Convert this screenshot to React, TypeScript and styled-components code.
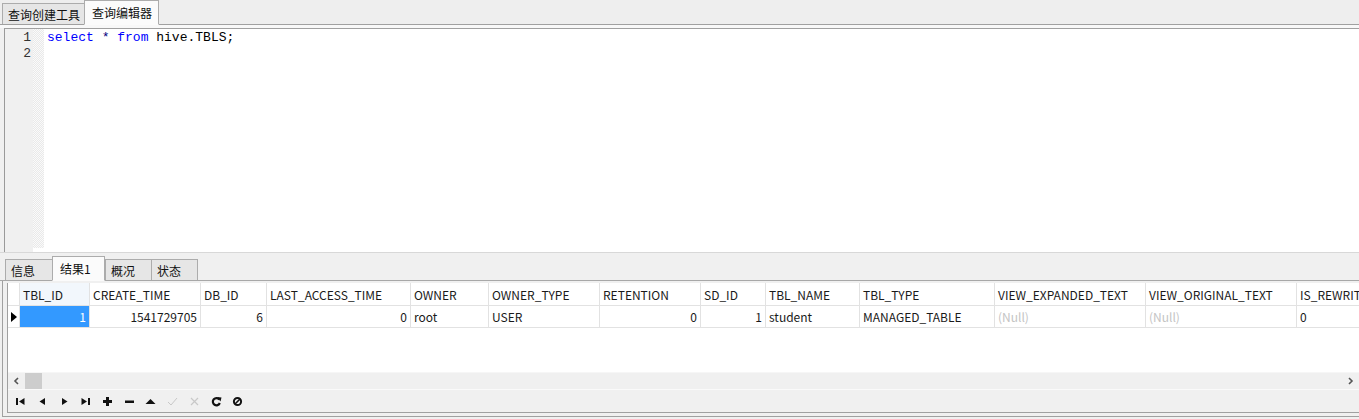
import React from "react";
import styled, { createGlobalStyle } from "styled-components";

const Global = createGlobalStyle`
  html, body { margin: 0; padding: 0; background: #f0f0f0; }
  #root { width: 1359px; height: 419px; overflow: hidden; }
`;

const UI = `"Noto Sans CJK SC", "Microsoft YaHei", sans-serif`;

const Window = styled.div`
  width: 1359px;
  height: 419px;
  display: flex;
  flex-direction: column;
  background: #f0f0f0;
  font-family: ${UI};
  font-size: 12px;
  color: #1a1a1a;
`;

const TopTabs = styled.div`
  height: 24px;
  display: flex;
  align-items: flex-end;
  padding-left: 2px;
  background: #eeeeee;
  border-bottom: 1px solid #a0a0a0;
`;

const Tab = styled.div<{ $active?: boolean; $w: number }>`
  box-sizing: border-box;
  width: ${(p) => p.$w}px;
  height: ${(p) => (p.$active ? 25 : 21)}px;
  margin-bottom: ${(p) => (p.$active ? -1 : 0)}px;
  display: flex;
  align-items: center;
  padding-left: ${(p) => (p.$active ? 7 : 5)}px;
  padding-top: ${(p) => (p.$active ? 0 : 1)}px;
  background: ${(p) => (p.$active ? "#fbfbfb" : "#e6e6e6")};
  border: 1px solid #acacac;
  border-bottom: ${(p) => (p.$active ? "1px solid #fbfbfb" : "none")};
  margin-right: ${(p) => (p.$active ? 0 : -1)}px;
  font-size: 12px;
  color: #111;
  position: relative;
  z-index: ${(p) => (p.$active ? 2 : 1)};
  white-space: nowrap;
`;

const Gap = styled.div<{ $h: number }>`
  height: ${(p) => p.$h}px;
  background: #f8f8f8;
`;

const Editor = styled.div`
  height: 219px;
  display: flex;
  margin-left: 4px;
  border-top: 1px solid #a0a0a0;
  border-left: 1px solid #9a9a9a;
  background: #fff;
`;

const Gutter = styled.div`
  width: 28px;
  background: #f0f0f0;
  display: flex;
  flex-direction: column;
  align-items: flex-end;
  padding-top: 1px;
  box-sizing: border-box;
`;

const LineNo = styled.div`
  height: 16px;
  line-height: 16px;
  font-family: "Liberation Mono", monospace;
  font-size: 13px;
  color: #333;
  padding-right: 2px;
`;

const Hatch = styled.div`
  width: 11px;
  background-color: #f6f6f6;
  background-image: repeating-conic-gradient(#e9e9e9 0 25%, #fafafa 0 50%);
  background-size: 2px 2px;
`;

const Code = styled.div`
  flex: 1;
  padding-left: 3px;
  padding-top: 1px;
  font-family: "Liberation Mono", "Courier New", monospace;
  font-size: 13px;
`;

const CodeLine = styled.div`
  height: 16px;
  line-height: 16px;
  white-space: pre;
  color: #000;
`;

const Kw = styled.span`
  color: #0000ff;
`;
const Op = styled.span`
  color: #000080;
`;

const Splitter = styled.div`
  height: 4px;
  margin-left: 4px;
  display: flex;
  border-left: 1px solid #9a9a9a;
  background: #fff;
`;

const SplitGutter = styled.div`
  width: 28px;
  background: #f0f0f0;
`;

const SplitLine = styled.div`
  height: 1px;
  background: #d8d8d8;
`;

const BottomTabs = styled.div`
  height: 25px;
  display: flex;
  align-items: flex-end;
  padding-left: 5px;
  margin-top: 2px;
  border-bottom: 1px solid #a8a8a8;
  background: #f0f0f0;
`;

const GridPanel = styled.div`
  flex: 1;
  display: flex;
  flex-direction: column;
  margin-left: 2px;
  margin-bottom: 2px;
  border-left: 1px solid #a0a0a0;
  border-bottom: 1px solid #a0a0a0;
  padding: 2px 0 3px 4px;
  background: #f0f0f0;
`;

const GridInner = styled.div`
  flex: 1;
  display: flex;
  flex-direction: column;
  border-left: 1px solid #a0a0a0;
  border-bottom: 1px solid #a0a0a0;
`;

const GridBody = styled.div`
  flex: 1;
  background: #fff;
  overflow: hidden;
`;

const Row = styled.div<{ $h: number }>`
  display: flex;
  height: ${(p) => p.$h}px;
  border-bottom: 1px solid #e2e2e2;
  box-sizing: border-box;
`;

const Indicator = styled.div`
  width: 11px;
  flex: none;
  border-right: 1px solid #e2e2e2;
  display: flex;
  align-items: center;
  justify-content: center;
  background: #fff;
`;

const Cell = styled.div<{ $w: number; $right?: boolean; $null?: boolean; $sel?: boolean; $head?: boolean; $selHead?: boolean }>`
  width: ${(p) => p.$w}px;
  flex: none;
  box-sizing: border-box;
  border-right: 1px solid #e2e2e2;
  padding: 0 3px;
  display: flex;
  align-items: center;
  justify-content: ${(p) => (p.$right ? "flex-end" : "flex-start")};
  white-space: nowrap;
  overflow: hidden;
  font-size: 12px;
  color: ${(p) => (p.$sel ? "#fff" : p.$null ? "#c4c4c4" : "#1a1a1a")};
  background: ${(p) => (p.$sel ? "#3399ff" : p.$selHead ? "#f2f7fc" : "#fff")};
  padding-top: ${(p) => (p.$head ? 1 : 0)}px;
`;

const HScroll = styled.div`
  height: 16px;
  flex: none;
  display: flex;
  align-items: center;
  background: #f0f0f0;
  border-top: 1px solid #f6f6f6;
`;

const ScrollArrow = styled.div`
  width: 17px;
  height: 16px;
  display: flex;
  align-items: center;
  justify-content: center;
`;

const Thumb = styled.div`
  width: 17px;
  height: 16px;
  background: #cdcdcd;
`;

const Track = styled.div`
  flex: 1;
`;

const Toolbar = styled.div`
  height: 22px;
  flex: none;
  display: flex;
  align-items: center;
  padding-left: 2px;
  border-top: 1px solid #fafafa;
  background: #f0f0f0;
`;

const ToolBtn = styled.div`
  width: 21.7px;
  height: 20px;
  display: flex;
  align-items: center;
  justify-content: center;
`;

const cols: { name: string; w: number; val: string; right?: boolean; nul?: boolean }[] = [
  { name: "TBL_ID", w: 70, val: "1", right: true },
  { name: "CREATE_TIME", w: 111, val: "1541729705", right: true },
  { name: "DB_ID", w: 66, val: "6", right: true },
  { name: "LAST_ACCESS_TIME", w: 144, val: "0", right: true },
  { name: "OWNER", w: 78, val: "root" },
  { name: "OWNER_TYPE", w: 111, val: "USER" },
  { name: "RETENTION", w: 101, val: "0", right: true },
  { name: "SD_ID", w: 65, val: "1", right: true },
  { name: "TBL_NAME", w: 94, val: "student" },
  { name: "TBL_TYPE", w: 135, val: "MANAGED_TABLE" },
  { name: "VIEW_EXPANDED_TEXT", w: 151, val: "(Null)", nul: true },
  { name: "VIEW_ORIGINAL_TEXT", w: 151, val: "(Null)", nul: true },
  { name: "IS_REWRITE_ENABLED", w: 150, val: "0" },
];

const Ico = ({ children, c = "#111" }: { children: React.ReactNode; c?: string }) => (
  <svg width="11" height="11" viewBox="0 0 11 11" fill={c} stroke={c}>
    {children}
  </svg>
);

const icons = [
  <Ico key="first">
    <rect x="1" y="2" width="2" height="7" stroke="none" />
    <polygon points="9.5,2 9.5,9 4,5.5" stroke="none" />
  </Ico>,
  <Ico key="prev">
    <polygon points="8,2 8,9 2.5,5.5" stroke="none" />
  </Ico>,
  <Ico key="next">
    <polygon points="3,2 3,9 8.5,5.5" stroke="none" />
  </Ico>,
  <Ico key="last">
    <polygon points="1.5,2 1.5,9 7,5.5" stroke="none" />
    <rect x="8" y="2" width="2" height="7" stroke="none" />
  </Ico>,
  <Ico key="plus">
    <rect x="4" y="1" width="3" height="9" stroke="none" />
    <rect x="1" y="4" width="9" height="3" stroke="none" />
  </Ico>,
  <Ico key="minus">
    <rect x="1" y="4.5" width="9" height="2.5" stroke="none" />
  </Ico>,
  <Ico key="up">
    <polygon points="0.5,8 10.5,8 5.5,3" stroke="none" />
  </Ico>,
  <Ico key="check" c="#c8c8c8">
    <polyline points="1,6 4,9 10,2" fill="none" strokeWidth="1" />
  </Ico>,
  <Ico key="x" c="#c8c8c8">
    <path d="M2 2 L9 9 M9 2 L2 9" fill="none" strokeWidth="1.2" />
  </Ico>,
  <Ico key="refresh">
    <path d="M8.3 3.5 A3.6 3.6 0 1 0 8.8 7" fill="none" strokeWidth="2.2" />
    <polygon points="6,1 10.5,1.5 9.5,5.5" stroke="none" />
  </Ico>,
  <Ico key="stop">
    <circle cx="5.5" cy="5.5" r="3.6" fill="none" strokeWidth="2" />
    <path d="M3 8 L8 3" fill="none" strokeWidth="1.6" />
  </Ico>,
];

export default function App() {
  return (
    <Window>
      <Global />
      <TopTabs>
        <Tab $w={83}>查询创建工具</Tab>
        <Tab $w={75} $active>
          查询编辑器
        </Tab>
      </TopTabs>
      <Gap $h={3} />
      <Editor>
        <Gutter>
          <LineNo>1</LineNo>
          <LineNo>2</LineNo>
        </Gutter>
        <Hatch />
        <Code>
          <CodeLine>
            <Kw>select</Kw> <Op>*</Op> <Kw>from</Kw> hive.TBLS;
          </CodeLine>
          <CodeLine> </CodeLine>
        </Code>
      </Editor>
      <Splitter>
        <SplitGutter />
      </Splitter>
      <SplitLine />
      <BottomTabs>
        <Tab $w={48}>信息</Tab>
        <Tab $w={53} $active>
          结果1
        </Tab>
        <Tab $w={47}>概况</Tab>
        <Tab $w={47}>状态</Tab>
      </BottomTabs>
      <GridPanel>
        <GridInner>
          <GridBody>
            <Row $h={23}>
              <Indicator />
              {cols.map((c, i) => (
                <Cell key={c.name} $w={c.w} $head $selHead={i === 0}>
                  {c.name}
                </Cell>
              ))}
            </Row>
            <Row $h={22}>
              <Indicator>
                <svg width="6" height="10" viewBox="0 0 6 10">
                  <polygon points="0,0 6,5 0,10" fill="#000" />
                </svg>
              </Indicator>
              {cols.map((c, i) => (
                <Cell key={c.name} $w={c.w} $right={c.right} $null={c.nul} $sel={i === 0}>
                  {c.val}
                </Cell>
              ))}
            </Row>
          </GridBody>
          <HScroll>
            <ScrollArrow>
              <svg width="7" height="8" viewBox="0 0 7 8">
                <path d="M5 1 L2 4 L5 7" fill="none" stroke="#555" strokeWidth="1.6" />
              </svg>
            </ScrollArrow>
            <Thumb />
            <Track />
            <ScrollArrow>
              <svg width="7" height="8" viewBox="0 0 7 8">
                <path d="M2 1 L5 4 L2 7" fill="none" stroke="#555" strokeWidth="1.6" />
              </svg>
            </ScrollArrow>
          </HScroll>
          <Toolbar>
            {icons.map((ic, i) => (
              <ToolBtn key={i}>{ic}</ToolBtn>
            ))}
          </Toolbar>
        </GridInner>
      </GridPanel>
    </Window>
  );
}
